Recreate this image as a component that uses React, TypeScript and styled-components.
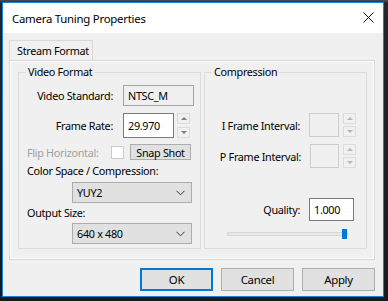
import React from "react";
import styled, { createGlobalStyle } from "styled-components";

const GlobalStyle = createGlobalStyle`
  html, body {
    margin: 0;
    padding: 0;
  }
  body {
    width: 388px;
    height: 301px;
    overflow: hidden;
    background: linear-gradient(180deg, #4a4e55 0px, #22272f 3px, #151a21 100%);
    font-family: "Noto Sans", "Segoe UI", sans-serif;
    font-size: 10.8px;
    letter-spacing: -0.3px;
    color: #000;
  }
`;

const Desktop = styled.div`
  padding: 2px 0 0 2px;
`;

const Window = styled.div`
  width: 380px;
  height: 293px;
  border: 1px solid #1883d7;
  background: #f0f0f0;
  display: flex;
  flex-direction: column;
`;

const TitleBar = styled.div`
  height: 30px;
  background: #fff;
  display: flex;
  align-items: center;
  padding-left: 9px;
  font-size: 11.4px;
  letter-spacing: -0.25px;
`;

const Title = styled.div`
  flex: 1;
`;

const Close = styled.svg`
  width: 11px;
  height: 11px;
  margin-right: 9px;
  margin-top: -1px;
`;

const Content = styled.div`
  flex: 1;
  display: flex;
  flex-direction: column;
  padding: 7px 8px 0 6px;
`;

const TabStrip = styled.div`
  display: flex;
  height: 20px;
`;

const Tab = styled.div`
  width: 84px;
  height: 20px;
  border: 1px solid #d9d9d9;
  border-bottom: none;
  background: #f0f0f0;
  padding-left: 7px;
  box-sizing: border-box;
  line-height: 20px;
  white-space: nowrap;
  position: relative;
  z-index: 1;
`;

const Panel = styled.div`
  height: 200px;
  border: 1px solid #d9d9d9;
  box-shadow: inset 0 0 0 1px #fff;
  display: flex;
  gap: 3px;
  padding: 11px 7px 9px 8px;
  box-sizing: border-box;
`;

const Group = styled.div<{ $w: number }>`
  position: relative;
  width: ${(p) => p.$w}px;
  height: 177px;
  box-sizing: border-box;
  border: 1px solid #dcdcdc;
  display: flex;
  flex-direction: column;
`;

const Legend = styled.div`
  position: absolute;
  left: 7px;
  top: -9px;
  padding: 0 2px;
  background: #f0f0f0;
  line-height: 16px;
  white-space: nowrap;
`;

const Row = styled.div<{ $mt: number; $h: number; $pl?: number }>`
  display: flex;
  align-items: center;
  margin-top: ${(p) => p.$mt}px;
  height: ${(p) => p.$h}px;
  padding-left: ${(p) => p.$pl || 0}px;
`;

const Label = styled.div<{ $w?: number; $right?: boolean; $disabled?: boolean }>`
  width: ${(p) => (p.$w ? `${p.$w}px` : "auto")};
  text-align: ${(p) => (p.$right ? "right" : "left")};
  color: ${(p) => (p.$disabled ? "#a0a0a0" : "#000")};
  white-space: nowrap;
  flex-shrink: 0;
`;

const Field = styled.div<{ $w: number; $h: number; $ml: number; $kind: "read" | "edit" | "off" }>`
  width: ${(p) => p.$w}px;
  height: ${(p) => p.$h}px;
  margin-left: ${(p) => p.$ml}px;
  box-sizing: border-box;
  border: 1px solid
    ${(p) => (p.$kind === "edit" ? "#7a7a7a" : p.$kind === "read" ? "#a5a5a5" : "#cccccc")};
  background: ${(p) => (p.$kind === "edit" ? "#fff" : "#f0f0f0")};
  padding-left: 4px;
  display: flex;
  align-items: center;
`;

const Spin = styled.div<{ $ml: number; $h: number }>`
  display: flex;
  flex-direction: column;
  justify-content: space-between;
  margin-left: ${(p) => p.$ml}px;
  height: ${(p) => p.$h}px;
  width: 13px;
`;

const SpinBtn = styled.div<{ $down?: boolean; $off?: boolean }>`
  height: 11px;
  box-sizing: border-box;
  border: 1px solid #dcdcdc;
  background: #f0f0f0;
  display: flex;
  align-items: center;
  justify-content: center;

  &::after {
    content: "";
    border-left: 3px solid transparent;
    border-right: 3px solid transparent;
    ${(p) =>
      p.$down
        ? `border-top: 3px solid ${p.$off ? "#b5b5b5" : "#7d7d7d"};`
        : `border-bottom: 3px solid ${p.$off ? "#b5b5b5" : "#7d7d7d"};`}
  }
`;

const Check = styled.div`
  width: 13px;
  height: 13px;
  box-sizing: border-box;
  border: 1px solid #cccccc;
  background: #fff;
  flex-shrink: 0;
`;

const SmallButton = styled.div`
  margin-left: 6px;
  width: 61px;
  height: 16px;
  box-sizing: border-box;
  border: 1px solid #adadad;
  background: #e1e1e1;
  display: flex;
  align-items: center;
  justify-content: center;
  white-space: nowrap;
`;

const Combo = styled.div`
  width: 120px;
  height: 21px;
  box-sizing: border-box;
  border: 1px solid #adadad;
  background: #e1e1e1;
  display: flex;
  align-items: center;
  padding: 0 4px 0 4px;
`;

const ComboText = styled.div`
  flex: 1;
`;

const Chevron = styled.svg`
  width: 9px;
  height: 6px;
  margin-right: 2px;
`;

const Track = styled.div`
  position: relative;
  width: 121px;
  height: 4px;
  box-sizing: border-box;
  border: 1px solid #d6d6d6;
  background: #e7eaea;
`;

const Thumb = styled.div`
  position: absolute;
  right: 0;
  top: -4px;
  width: 5px;
  height: 10px;
  background: #0078d7;
`;

const Footer = styled.div`
  display: flex;
  justify-content: flex-end;
  gap: 8px;
  margin-top: 8px;
`;

const Button = styled.div<{ $default?: boolean }>`
  width: 73px;
  height: 23px;
  box-sizing: border-box;
  border: ${(p) => (p.$default ? "2px solid #0078d7" : "1px solid #adadad")};
  background: #e1e1e1;
  display: flex;
  align-items: center;
  justify-content: center;
  font-size: 11.4px;
`;

const Spinner = ({ ml, h, off }: { ml: number; h: number; off?: boolean }) => (
  <Spin $ml={ml} $h={h}>
    <SpinBtn $off={off} />
    <SpinBtn $down $off={off} />
  </Spin>
);

const Select = ({ value }: { value: string }) => (
  <Combo>
    <ComboText>{value}</ComboText>
    <Chevron viewBox="0 0 9 6">
      <path d="M0.5 0.8 L4.5 4.8 L8.5 0.8" fill="none" stroke="#333" strokeWidth="1" />
    </Chevron>
  </Combo>
);

export default function App() {
  return (
    <>
      <GlobalStyle />
      <Desktop>
        <Window>
          <TitleBar>
            <Title>Camera Tuning Properties</Title>
            <Close viewBox="0 0 11 11">
              <path d="M0.5 0.5 L10.5 10.5 M10.5 0.5 L0.5 10.5" stroke="#111" strokeWidth="1" />
            </Close>
          </TitleBar>
          <Content>
            <TabStrip>
              <Tab>Stream Format</Tab>
            </TabStrip>
            <Panel>
              <Group $w={183}>
                <Legend>Video Format</Legend>
                <Row $mt={12} $h={21}>
                  <Label $w={94} $right>
                    Video Standard:
                  </Label>
                  <Field $w={71} $h={21} $ml={10} $kind="read">
                    NTSC_M
                  </Field>
                </Row>
                <Row $mt={7} $h={25}>
                  <Label $w={94} $right>
                    Frame Rate:
                  </Label>
                  <Field $w={51} $h={25} $ml={10} $kind="edit">
                    29.970
                  </Field>
                  <Spinner ml={3} h={25} />
                </Row>
                <Row $mt={6} $h={16} $pl={8}>
                  <Label $w={84} $disabled>
                    Flip Horizontal:
                  </Label>
                  <Check />
                  <SmallButton>Snap Shot</SmallButton>
                </Row>
                <Row $mt={2} $h={16} $pl={8}>
                  <Label>Color Space / Compression:</Label>
                </Row>
                <Row $mt={4} $h={21} $pl={53}>
                  <Select value="YUY2" />
                </Row>
                <Row $mt={1} $h={16} $pl={8}>
                  <Label>Output Size:</Label>
                </Row>
                <Row $mt={3} $h={21} $pl={53}>
                  <Select value="640 x 480" />
                </Row>
              </Group>
              <Group $w={163}>
                <Legend>Compression</Legend>
                <Row $mt={40} $h={24}>
                  <Label $w={95} $right>
                    I Frame Interval:
                  </Label>
                  <Field $w={30} $h={24} $ml={9} $kind="off" />
                  <Spinner ml={4} h={24} off />
                </Row>
                <Row $mt={7} $h={24}>
                  <Label $w={96} $right>
                    P Frame Interval:
                  </Label>
                  <Field $w={29} $h={24} $ml={9} $kind="off" />
                  <Spinner ml={4} h={24} off />
                </Row>
                <Row $mt={30} $h={23}>
                  <Label $w={95} $right>
                    Quality:
                  </Label>
                  <Field $w={45} $h={23} $ml={9} $kind="edit">
                    1.000
                  </Field>
                </Row>
                <Row $mt={8} $h={10} $pl={22}>
                  <Track>
                    <Thumb />
                  </Track>
                </Row>
              </Group>
            </Panel>
            <Footer>
              <Button $default>OK</Button>
              <Button>Cancel</Button>
              <Button>Apply</Button>
            </Footer>
          </Content>
        </Window>
      </Desktop>
    </>
  );
}
